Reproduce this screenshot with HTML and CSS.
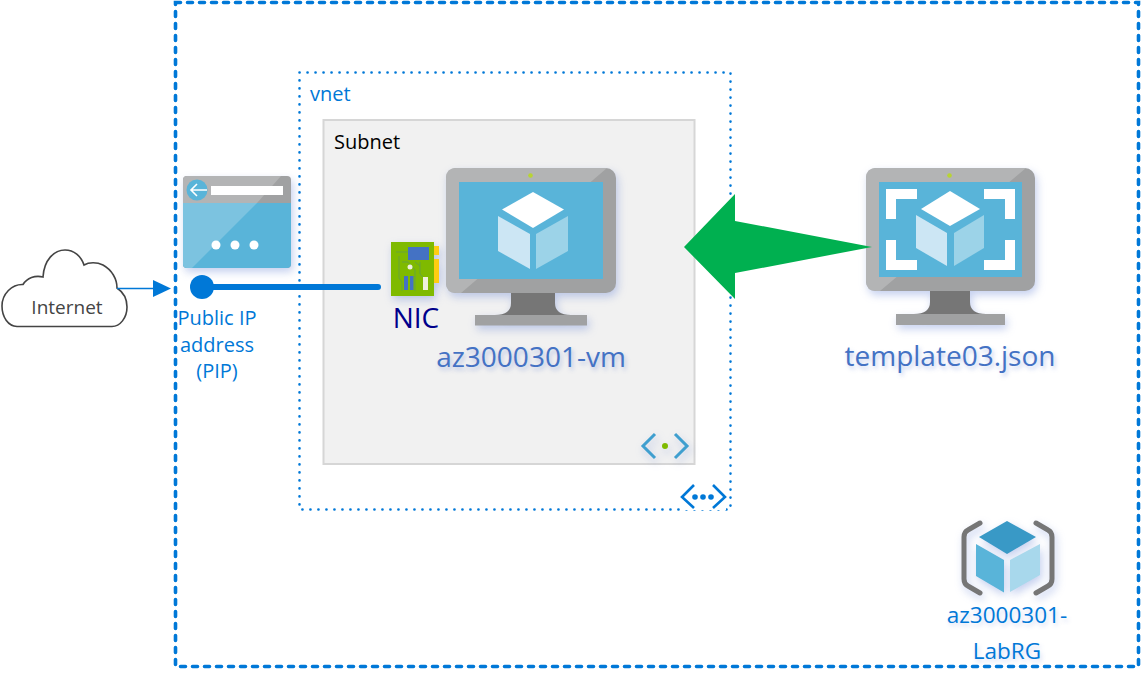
FILE: index.html
```html
<!doctype html>
<html lang="en">
<head>
  <meta charset="utf-8">
  <title>az3000301 lab diagram</title>
  <link rel="stylesheet" href="styles.css">
</head>
<body>
  <div class="diagram">
    <svg class="canvas" width="1142" height="692" viewBox="0 0 1142 692" aria-hidden="true">
      <!-- containers -->
      <rect class="rg-box" x="175.5" y="2.5" width="963" height="664"/>
      <rect class="vnet-box" x="299.5" y="72.5" width="431" height="437"/>
      <rect class="subnet-box" x="323.5" y="120" width="371" height="344"/>

      <!-- internet -->
      <path class="cloud" d="M17 326.5C8 326 2 317 2 306C2 294 12 284 23 284.5C27 278 35 275 43 277C44 260 54 250 65 250C74 250 81 256 84 265C89 262 97 262 103 265C112 270 117 279 117 288C123 292 127 299 127 307C127 318 120 326.5 112 326.5Z"/>
      <path class="link-thin" d="M117 288.5H155"/>
      <path class="link-head" d="M153 280L171 288.5L153 297Z"/>

      <!-- public ip -->
      <g class="icon">
        <rect class="grey-dark" x="183" y="176" width="108" height="92" rx="4"/>
        <path class="grey-light" d="M187 176H281L257 203H183V180Q183 176 187 176Z"/>
        <path class="sky" d="M183 203H291V264Q291 268 287 268H187Q183 268 183 264Z"/>
        <path class="sky-light" d="M183 203H257L192 268H187Q183 268 183 264Z"/>
        <circle class="sky" cx="197" cy="190" r="10.5"/>
        <path class="back-arrow" d="M207 190H192M197 184L191 190L197 196"/>
        <rect class="white" x="211" y="186" width="72" height="9"/>
        <circle class="white" cx="216" cy="245" r="4.5"/>
        <circle class="white" cx="235" cy="245" r="4.5"/>
        <circle class="white" cx="254" cy="245" r="4.5"/>
      </g>
      <path class="link-thick" d="M202 287H378"/>
      <circle class="link-dot" cx="202" cy="287" r="12"/>

      <!-- nic -->
      <g class="icon">
        <rect class="yellow" x="434" y="246" width="5" height="9"/>
        <rect class="yellow" x="434" y="259" width="5" height="24"/>
        <rect class="nic-board" x="391" y="242" width="43" height="54"/>
        <path class="nic-trace" d="M396 252H408M399 256V278L402 282V291M402 262H408L415 270V291M420 262V274L423 277M415 262L420 266"/>
        <rect class="nic-chip" x="408" y="247" width="21" height="13"/>
        <circle class="nic-pin" cx="410" cy="267" r="2.5"/>
        <rect class="nic-chip" x="404" y="276" width="4" height="14"/>
        <rect class="nic-chip" x="410" y="276" width="3.5" height="14"/>
        <rect class="nic-pin" x="423" y="277" width="5" height="13"/>
      </g>

      <!-- vm monitor -->
      <g class="icon">
        <path class="grey-neck" d="M511 292V303Q511 315 495 315H571Q555 315 555 303V292Z"/>
        <rect class="grey-dark" x="475" y="315" width="112" height="10.5"/>
        <rect class="grey-dark" x="446" y="168" width="170" height="125" rx="10"/>
        <path class="grey-light" d="M456 168H607L461 293H456Q446 293 446 283V178Q446 168 456 168Z"/>
        <rect class="sky" x="459" y="182" width="144" height="97"/>
        <circle class="led" cx="530.5" cy="175.5" r="2.3"/>
        <path class="white" d="M533 192L564 209.5L533 228L502 209.5Z"/>
        <path class="cube-left" d="M498 216L530 234V269L498 251Z"/>
        <path class="cube-right" d="M536 234L568 216V251L536 269Z"/>
      </g>

      <!-- template monitor -->
      <g class="icon">
        <path class="grey-neck" d="M930 290V302Q930 314 914 314H986Q970 314 970 302V290Z"/>
        <rect class="grey-dark" x="896" y="314" width="109" height="11"/>
        <rect class="grey-dark" x="866" y="168" width="169" height="123" rx="10"/>
        <path class="grey-light" d="M876 168H1026L880 291H876Q866 291 866 281V178Q866 168 876 168Z"/>
        <rect class="sky" x="879" y="182" width="143" height="95"/>
        <circle class="led" cx="949.5" cy="175.5" r="2.3"/>
        <path class="white" d="M886 189H917V199H896V219H886Z"/>
        <path class="white" d="M984 189H1015V219H1005V199H984Z"/>
        <path class="white" d="M886 240H896V260H917V270H886Z"/>
        <path class="white" d="M1005 240H1015V270H984V260H1005Z"/>
        <path class="white" d="M950 191L980 209L950 226L921 209Z"/>
        <path class="cube-left" d="M916 215L947 233V266L916 248Z"/>
        <path class="cube-right" d="M954 233L984 215V248L954 266Z"/>
      </g>

      <!-- deployment arrow -->
      <path class="deploy-arrow" d="M684 247L735 194V221L872 247L735 273V299Z"/>

      <!-- subnet and vnet badges -->
      <g class="icon">
        <path class="chevron-sky" d="M655 434L643 446L655 458M675 434L687 446L675 458"/>
        <circle class="led-green" cx="665" cy="446" r="3"/>
      </g>
      <rect class="white" x="680" y="484" width="46" height="26"/>
      <path class="chevron-blue" d="M694 485L682 497L694 508M713 485L725 497L713 508"/>
      <circle class="link-dot" cx="695" cy="497" r="2.8"/>
      <circle class="link-dot" cx="703" cy="497" r="2.8"/>
      <circle class="link-dot" cx="711" cy="497" r="2.8"/>

      <!-- resource group -->
      <g class="icon">
        <path class="bracket" d="M980 523L968 530Q964 532 964 537V579Q964 584 968 586L980 593"/>
        <path class="bracket" d="M1036 523L1048 530Q1052 532 1052 537V579Q1052 584 1048 586L1036 593"/>
        <path class="rg-top" d="M1007 521L1036 537L1007 554L979 537Z"/>
        <path class="sky" d="M976 544L1004 560V592.5L976 576Z"/>
        <path class="rg-right" d="M1010 560L1040 544V575L1010 592Z"/>
      </g>
    </svg>

    <div class="label label-grey label-internet">Internet</div>
    <div class="label label-blue label-pip">Public IP<br>address<br>(PIP)</div>
    <div class="label label-blue label-vnet">vnet</div>
    <div class="label label-black label-subnet">Subnet</div>
    <div class="label label-nic">NIC</div>
    <div class="label label-large label-vm">az3000301-vm</div>
    <div class="label label-large label-template">template03.json</div>
    <div class="label label-blue label-rg">az3000301-<br>LabRG</div>
  </div>
</body>
</html>
```

FILE: styles.css
```css
html, body {
  margin: 0;
  padding: 0;
  background: #fff;
}
.diagram {
  position: relative;
  width: 1142px;
  height: 692px;
  overflow: hidden;
  font-family: "Open Sans", "Noto Sans", Arial, sans-serif;
}
.canvas {
  position: absolute;
  top: 0;
  left: 0;
}

/* containers */
.rg-box {
  fill: none;
  stroke: #0078d7;
  stroke-width: 3.6;
  stroke-dasharray: 5 7;
  stroke-linecap: round;
}
.vnet-box {
  fill: none;
  stroke: #0078d7;
  stroke-width: 2.6;
  stroke-dasharray: .1 7.9;
  stroke-linecap: round;
}
.subnet-box {
  fill: #f1f1f1;
  stroke: #d6d6d6;
  stroke-width: 2;
}

/* shared fills */
.icon { filter: drop-shadow(2px 4px 4px rgba(90, 120, 210, .35)); }
.white { fill: #fff; }
.sky { fill: #59b4d9; }
.sky-light { fill: #7cc3e0; }
.grey-dark { fill: #a0a1a2; }
.grey-light { fill: #b3b4b5; }
.grey-neck { fill: #767676; }
.led { fill: #b8d432; }
.led-green { fill: #7fba00; }
.cube-left { fill: #cce6f4; }
.cube-right { fill: #9cd3e8; }
.yellow { fill: #ffcd11; }

/* links */
.cloud {
  fill: #fff;
  stroke: #444;
  stroke-width: 1.6;
}
.link-thin {
  fill: none;
  stroke: #0078d7;
  stroke-width: 1.5;
}
.link-head, .link-dot { fill: #0078d7; }
.link-thick {
  fill: none;
  stroke: #0078d7;
  stroke-width: 6;
  stroke-linecap: round;
}
.back-arrow {
  fill: none;
  stroke: #fff;
  stroke-width: 1.6;
}
.deploy-arrow { fill: #00b050; }

/* nic */
.nic-board { fill: #7fba00; }
.nic-trace {
  fill: none;
  stroke: #68a33a;
  stroke-width: 1;
}
.nic-chip { fill: #4472c4; }
.nic-pin { fill: #eef0dc; }

/* badges */
.chevron-sky {
  fill: none;
  stroke: #3f9fcf;
  stroke-width: 3;
}
.chevron-blue {
  fill: none;
  stroke: #0078d7;
  stroke-width: 2.6;
}
.bracket {
  fill: none;
  stroke: #767676;
  stroke-width: 5;
  stroke-linecap: round;
}
.rg-top { fill: #3999c6; }
.rg-right { fill: #a8d8ec; }

/* labels */
.label {
  position: absolute;
  text-align: center;
  white-space: nowrap;
}
.label-blue { color: #0078d7; }
.label-black { color: #000; }
.label-grey { color: #444; }
.label-internet {
  left: 17px;
  top: 295px;
  width: 100px;
  font-size: 19px;
  line-height: 25px;
}
.label-pip {
  left: 167px;
  top: 305px;
  width: 100px;
  font-size: 20px;
  line-height: 26.5px;
}
.label-vnet {
  left: 310px;
  top: 81px;
  font-size: 20px;
  line-height: 25px;
}
.label-subnet {
  left: 334px;
  top: 129px;
  font-size: 20px;
  line-height: 25px;
}
.label-nic {
  left: 376px;
  top: 299px;
  width: 80px;
  color: #00008b;
  font-size: 28px;
  line-height: 36px;
}
.label-large {
  color: #4472c4;
  font-size: 28px;
  line-height: 36px;
  text-shadow: 2px 3px 4px rgba(90, 120, 210, .35);
}
.label-vm {
  left: 381px;
  top: 338px;
  width: 300px;
}
.label-template {
  left: 800px;
  top: 337px;
  width: 300px;
}
.label-rg {
  left: 946px;
  top: 597px;
  width: 122px;
  font-size: 22.5px;
  line-height: 36px;
  text-shadow: 2px 3px 4px rgba(90, 120, 210, .25);
}
```
